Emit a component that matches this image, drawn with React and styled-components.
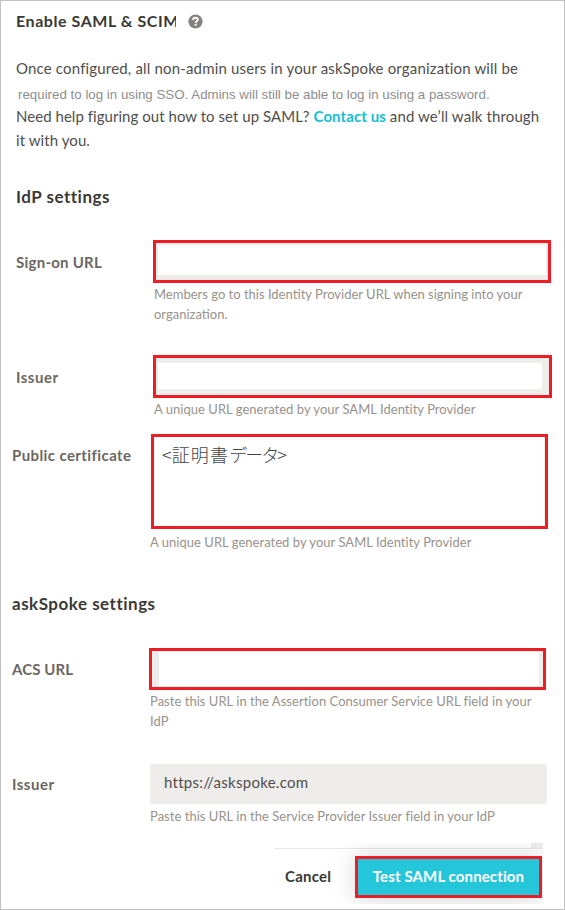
import React from 'react';
import styled, { createGlobalStyle } from 'styled-components';

const GlobalStyle = createGlobalStyle`
  * { box-sizing: border-box; }
  body { margin: 0; background: #fff; }
`;

const Panel = styled.main`
  width: 565px;
  height: 910px;
  padding-top: 8px;
  overflow: hidden;
  border: 1px solid #c1c1c1;
  background: #fff;
  color: #504e4b;
  font: 400 15px/24px Lato, 'Open Sans', sans-serif;
`;

const TitleBar = styled.header`
  display: flex;
  align-items: center;
  gap: 12px;
  height: 24px;
  margin-left: 15px;
`;

const Title = styled.h1`
  width: 160px;
  margin: 0;
  overflow: hidden;
  color: #3b3936;
  font-size: 16px;
  font-weight: 700;
  line-height: 24px;
  letter-spacing: 0.56px;
  white-space: nowrap;
`;

const HelpIcon = styled.svg`
  display: block;
  width: 15px;
  height: 15px;
`;

const Intro = styled.p`
  margin: 23px 0 0 15px;
`;

const IntroLine = styled.span`
  display: block;
  height: 24px;
  white-space: nowrap;
  letter-spacing: ${(p) => p.$spacing || 0}px;
`;

const PlainLine = styled(IntroLine)`
  padding: 3px 0 0 2px;
  color: #8e8e8e;
  font-family: 'Liberation Sans', Arial, sans-serif;
  font-size: 13.3px;
`;

const ContactLink = styled.a`
  color: #14bfd6;
  font-weight: 700;
  letter-spacing: 0.1px;
  text-decoration: none;
`;

const Tail = styled.span`
  letter-spacing: 0.11px;
`;

const SectionTitle = styled.h2`
  margin: ${(p) => p.$top}px 0 0 ${(p) => p.$left}px;
  color: #3b3936;
  font-size: 17px;
  font-weight: 700;
  line-height: 24px;
  letter-spacing: 0.5px;
`;

const FieldRow = styled.div`
  display: grid;
  grid-template-columns: ${(p) => p.$labelWidth}px ${(p) => p.$width}px;
  margin: ${(p) => p.$top}px 0 0 ${(p) => p.$left}px;
`;

const Label = styled.label`
  color: #6b6761;
  font-weight: 700;
  line-height: ${(p) => p.$line}px;
  letter-spacing: ${(p) => p.$spacing}px;
  white-space: nowrap;
`;

const Highlight = styled.div`
  display: flex;
  height: ${(p) => p.$height}px;
  padding: ${(p) => p.$inset};
  border: 3px solid #ee1c25;
  background: #eeedec;
`;

const Input = styled.div`
  flex: 1;
  border-radius: ${(p) => p.$radius || '0'};
  background: #fff;
`;

const Certificate = styled(Input)`
  padding: 4px 8px;
  color: #444;
  font: 300 18px/26px 'Noto Sans CJK JP', sans-serif;
  white-space: nowrap;
`;

const Kanji = styled.span`
  letter-spacing: 1.2px;
`;

const Kana = styled.span`
  letter-spacing: -2px;
`;

const ReadOnly = styled.div`
  height: 40px;
  padding-left: 14px;
  border-radius: 2px;
  background: #eeedeb;
  color: #504e4b;
  line-height: 37px;
  letter-spacing: 0.28px;
`;

const Hint = styled.p`
  margin: ${(p) => p.$top}px 0 0 ${(p) => p.$left || 0}px;
  color: #97928b;
  font-size: 13px;
  line-height: 20px;
  letter-spacing: ${(p) => p.$spacing || 0}px;
`;

const HintLine = styled.span`
  display: block;
  white-space: nowrap;
`;

const Footer = styled.footer`
  display: flex;
  flex-direction: column;
  width: 269px;
  height: 61px;
  margin: 17px 0 0 273px;
  overflow: hidden;
`;

const ScrollCorner = styled.div`
  flex: none;
  align-self: flex-end;
  width: 12px;
  height: 5px;
  background: #eeeeee;
`;

const Actions = styled.div`
  display: flex;
  flex: 1;
  align-items: flex-start;
  justify-content: space-between;
  padding: 7px 1px 0 11px;
  border-top: 1px solid #e8e8e8;
`;

const Button = styled.button`
  height: 42px;
  padding: 0 0 2px;
  border: 0;
  background: none;
  color: #3b3936;
  font: 700 15px/34px Lato, sans-serif;
  letter-spacing: 0.25px;
  white-space: nowrap;
`;

const PrimaryButton = styled(Button)`
  width: 187px;
  border: 3px solid #ee1c25;
  background: #26c6da;
  box-shadow: 0 0 24px rgba(0, 0, 0, 0.17);
  color: #fff;
  letter-spacing: 0.12px;
`;

export default function App() {
  return (
    <>
      <GlobalStyle />
      <Panel>
        <TitleBar>
          <Title>Enable SAML &amp; SCIM</Title>
          <HelpIcon viewBox="0 0 15 15" aria-label="Help">
            <circle cx="7.5" cy="7.5" r="7.1" fill="#85827e" />
            <path d="M5.1 6C5.1 4.4 6.1 3.7 7.5 3.7c1.4 0 2.3.7 2.3 1.9 0 1.6-2.1 1.6-2.1 3.1" fill="none" stroke="#fff" strokeWidth="1.9" />
            <rect x="6.7" y="9.8" width="2" height="1.9" fill="#fff" />
          </HelpIcon>
        </TitleBar>

        <Intro>
          <IntroLine $spacing={0.17}>Once configured, all non-admin users in your askSpoke organization will be</IntroLine>
          <PlainLine $spacing={0.01}>required to log in using SSO. Admins will still be able to log in using a password.</PlainLine>
          <IntroLine $spacing={0.04}>
            Need help figuring out how to set up SAML? <ContactLink>Contact us</ContactLink>{' '}
            <Tail>and we’ll walk through</Tail>
          </IntroLine>
          <IntroLine $spacing={0.08}>it with you.</IntroLine>
        </Intro>

        <SectionTitle $top={33} $left={15}>IdP settings</SectionTitle>
        <FieldRow $top={31} $left={15} $labelWidth={137} $width={398}>
          <Label $line={45} $spacing={0.25}>Sign-on URL</Label>
          <div>
            <Highlight $height={43} $inset="2px 2px 5px 2px"><Input /></Highlight>
            <Hint $top={1} $left={1}>
              <HintLine>Members go to this Identity Provider URL when signing into your</HintLine>
              <HintLine>organization.</HintLine>
            </Hint>
          </div>
        </FieldRow>
        <FieldRow $top={31} $left={15} $labelWidth={137} $width={399}>
          <Label $line={45} $spacing={0.5}>Issuer</Label>
          <div>
            <Highlight $height={43} $inset="5px 7px 6px 2px"><Input $radius="0 3px 3px 0" /></Highlight>
            <Hint $top={1} $left={1} $spacing={0.03}>A unique URL generated by your SAML Identity Provider</Hint>
          </div>
        </FieldRow>
        <FieldRow $top={15} $left={11} $labelWidth={139} $width={397}>
          <Label $line={43} $spacing={0.4}>Public certificate</Label>
          <div>
            <Highlight $height={95} $inset="0 1px 0 0">
              <Certificate>&lt;<Kanji>証明書</Kanji><Kana>データ</Kana>&gt;</Certificate>
            </Highlight>
            <Hint $top={3} $left={-1} $spacing={0.03}>A unique URL generated by your SAML Identity Provider</Hint>
          </div>
        </FieldRow>

        <SectionTitle $top={40} $left={11}>askSpoke settings</SectionTitle>
        <FieldRow $top={32} $left={11} $labelWidth={137} $width={397}>
          <Label $line={43} $spacing={0.1}>ACS URL</Label>
          <div>
            <Highlight $height={42} $inset="1px 4px 1px 7px"><Input /></Highlight>
            <Hint $top={1} $left={1} $spacing={0.03}>
              <HintLine>Paste this URL in the Assertion Consumer Service URL field in your</HintLine>
              <HintLine>IdP</HintLine>
            </Hint>
          </div>
        </FieldRow>
        <FieldRow $top={33} $left={11} $labelWidth={138} $width={397}>
          <Label $line={41} $spacing={0.5}>Issuer</Label>
          <div>
            <ReadOnly>https://askspoke.com</ReadOnly>
            <Hint $top={2} $spacing={0.03}>Paste this URL in the Service Provider Issuer field in your IdP</Hint>
          </div>
        </FieldRow>

        <Footer>
          <ScrollCorner />
          <Actions>
            <Button type="button">Cancel</Button>
            <PrimaryButton type="button">Test SAML connection</PrimaryButton>
          </Actions>
        </Footer>
      </Panel>
    </>
  );
}
